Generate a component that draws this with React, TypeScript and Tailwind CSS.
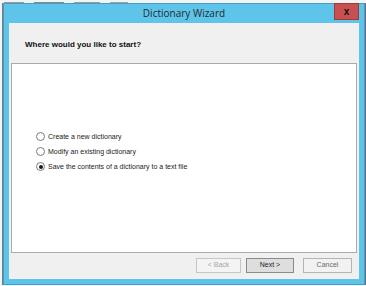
import { useState } from 'react';

const options = [
  'Create a new dictionary',
  'Modify an existing dictionary',
  'Save the contents of a dictionary to a text file',
];

function Radio({ checked, label, onClick }: { checked: boolean; label: string; onClick: () => void }) {
  return (
    <button onClick={onClick} className="flex items-center h-[15px] gap-[3px] text-left">
      <span className="w-[9px] h-[9px] rounded-full border border-[#7a7a7a] bg-white flex items-center justify-center">
        {checked && <span className="w-[4px] h-[4px] rounded-full bg-[#1a1a1a]" />}
      </span>
      <span className="text-[7px] leading-[9px] text-[#222]">{label}</span>
    </button>
  );
}

export default function App() {
  const [selected, setSelected] = useState(2);

  return (
    <div className="w-[366px] h-[286px] bg-[#f4f4f4] overflow-hidden flex flex-col font-['Liberation_Sans',Arial,sans-serif]">
      {/* background window peeking above */}
      <div className="h-[3px] flex items-end gap-[10px] pl-[4px] shrink-0">
        <span className="w-[20px] h-[1px] bg-[#9a9a9a]" />
        <span className="w-[30px] h-[1px] bg-[#8a8a8a]" />
        <span className="w-[26px] h-[1px] bg-[#9a9a9a]" />
        <span className="w-[18px] h-[1px] bg-[#a0a0a0]" />
      </div>

      <div className="flex h-[282px] shrink-0">
        <div className="w-[3px] border-r border-[#7a7a7a]" />

        {/* window */}
        <div className="w-[362px] bg-[#5ec4e9] border border-[#3f9fc6] flex flex-col">
          {/* title bar */}
          <div className="h-[19px] grid grid-cols-[1fr_auto_1fr] items-center">
            <div />
            <span className="text-[10px] leading-[13px] text-[#1e2a30] font-['Open_Sans',sans-serif]">
              Dictionary Wizard
            </span>
            <div className="flex justify-end self-start pr-[5px] -mt-[1px]">
              <div className="w-[25px] h-[17px] bg-[#c75050] border border-[#a03b3b] flex items-center justify-center text-[10px] font-bold leading-none text-[#111]">
                x
              </div>
            </div>
          </div>

          {/* client area */}
          <div className="mx-[5px] h-[256px] bg-[#f0f0f0] flex flex-col">
            <div className="h-[40px] pl-[16px] pt-[17px] shrink-0">
              <p className="text-[8px] leading-[10px] font-bold text-[#111]">Where would you like to start?</p>
            </div>

            <div className="mx-[2px] h-[190px] bg-white border border-[#ababab] pl-[24px] pt-[65px] flex flex-col shrink-0">
              {options.map((o, i) => (
                <Radio key={o} label={o} checked={selected === i} onClick={() => setSelected(i)} />
              ))}
            </div>

            <div className="flex-1 flex justify-end items-start pt-[5px] pr-[7px] text-[7px]">
              <button disabled className="w-[45px] h-[15px] bg-[#f4f4f4] border border-[#c6c6c6] text-[#a6a6a6]">
                &lt; Back
              </button>
              <button className="ml-[5px] w-[48px] h-[15px] bg-[#dedede] border border-[#8a8a8a] text-[#1a1a1a]">
                Next &gt;
              </button>
              <button className="ml-[9px] w-[49px] h-[15px] bg-[#f2f2f2] border border-[#b4b4b4] text-[#6a6a6a]">
                Cancel
              </button>
            </div>
          </div>
        </div>

        <div className="flex-1 bg-[#6e6e6e]" />
      </div>
    </div>
  );
}
